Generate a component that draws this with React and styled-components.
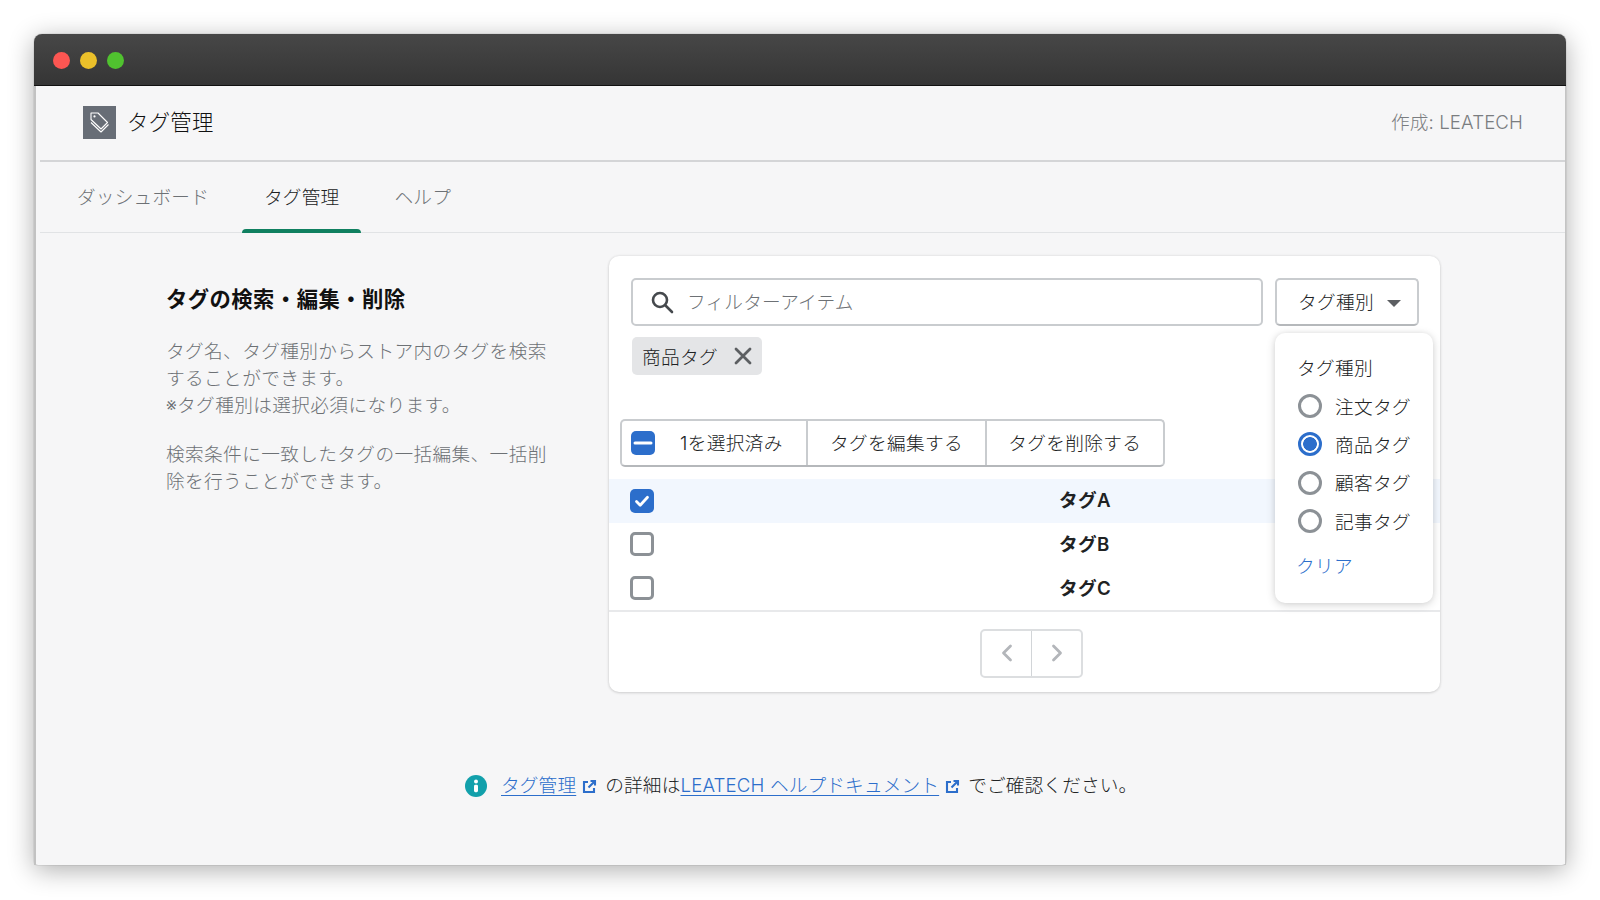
import React from "react";
import styled, { createGlobalStyle } from "styled-components";

const Global = createGlobalStyle`
  html, body { margin: 0; padding: 0; background: #fff; }
  body { font-family: Inter, "Noto Sans CJK JP", sans-serif; color: #202223; font-size: 18.67px; letter-spacing: 0.35px; }
  * { box-sizing: border-box; }
`;

const Page = styled.div`
  width: 1600px;
  height: 900px;
  padding: 34px;
  overflow: hidden;
`;

const Win = styled.div`
  width: 1532px;
  height: 831px;
  display: flex;
  flex-direction: column;
  background: #f6f6f7;
  border-radius: 8px 8px 4px 4px;
  box-shadow: 0 0 1px rgba(0, 0, 0, 0.55), 0 5px 26px rgba(0, 0, 0, 0.32);
`;

const TitleBar = styled.div`
  height: 52px;
  flex: none;
  display: flex;
  align-items: center;
  gap: 10px;
  padding: 1px 0 0 19px;
  border-radius: 8px 8px 0 0;
  background: linear-gradient(#474747, #353535);
  border-bottom: 1px solid #111;
`;

const Dot = styled.span`
  width: 17px;
  height: 17px;
  border-radius: 50%;
  background: ${(p) => p.$color};
`;

const Content = styled.div`
  flex: 1;
  display: flex;
  flex-direction: column;
  padding-left: 4px;
  border-left: 2px solid #c2c2c2;
  border-right: 1px solid #c4c4c4;
`;

const Txt = styled.span`
  display: block;
  padding-bottom: ${(p) => p.$lift ?? 4}px;
`;

const Header = styled.header`
  height: 76px;
  flex: none;
  display: flex;
  align-items: center;
  justify-content: space-between;
  padding: 0 42px 2px 43px;
  border-bottom: 2px solid #d4d5d7;
`;

const Brand = styled.div`
  display: flex;
  align-items: center;
  gap: 11px;
  font-size: 21.33px;
  font-weight: 300;
  color: #111;
`;

const BrandIcon = styled.div`
  width: 33px;
  height: 33px;
  display: flex;
  align-items: center;
  justify-content: center;
  background: #676d76;
`;

const Author = styled.div`
  color: #7a7d80;
  font-weight: 300;
  letter-spacing: 0.12px;
`;

const Tabs = styled.nav`
  height: 71px;
  flex: none;
  display: flex;
  padding-left: 15px;
  gap: 11px;
  border-bottom: 1px solid #e1e3e5;
  letter-spacing: 0.2px;
`;

const Tab = styled.div`
  position: relative;
  display: flex;
  align-items: center;
  padding: 0 22px;
  height: 100%;
  font-weight: 300;
  color: ${(p) => (p.$active ? "#202223" : "#6d7175")};
  &::after {
    content: "";
    display: ${(p) => (p.$active ? "block" : "none")};
    position: absolute;
    left: 0;
    right: 0;
    bottom: -1px;
    height: 4px;
    border-radius: 4px 4px 0 0;
    background: #108060;
  }
`;

const Main = styled.main`
  display: flex;
  padding: 23px 0 0 126px;
`;

const Intro = styled.section`
  width: 443px;
  flex: none;
  padding-top: 28px;
`;

const IntroTitle = styled.h2`
  margin: 0 0 24px;
  font-size: 21.33px;
  line-height: 30px;
  font-weight: 600;
  color: #111;
  letter-spacing: 0.45px;
`;

const IntroText = styled.p`
  margin: 0 0 21.5px;
  width: 392px;
  font-size: 18.67px;
  line-height: 27.2px;
  font-weight: 300;
  color: #6d7175;
  letter-spacing: 0.38px;
`;

const Card = styled.section`
  position: relative;
  width: 831px;
  height: 436px;
  flex: none;
  padding-top: 22px;
  background: #fff;
  border-radius: 10px;
  box-shadow: 0 0 3px rgba(23, 24, 24, 0.1), 0 1px 3px rgba(0, 0, 0, 0.12);
`;

const FilterRow = styled.div`
  display: flex;
  gap: 12px;
  padding: 0 21px 0 22px;
`;

const SearchBox = styled.div`
  flex: 1;
  height: 48px;
  display: flex;
  align-items: center;
  gap: 13px;
  padding-left: 17px;
  border: 2px solid #c9cccf;
  border-radius: 5px;
  font-weight: 300;
  color: #6d7175;
  letter-spacing: 0.2px;
`;

const TypeButton = styled.div`
  width: 144px;
  height: 48px;
  display: flex;
  align-items: center;
  gap: 13px;
  padding-left: 21px;
  border: 2px solid #c9cccf;
  border-bottom-color: #b5b8bb;
  border-radius: 5px;
  font-weight: 300;
`;

const Caret = styled.span`
  width: 0;
  height: 0;
  margin-top: 2px;
  border-left: 7px solid transparent;
  border-right: 7px solid transparent;
  border-top: 7px solid #5c5f62;
`;

const Chip = styled.div`
  display: inline-flex;
  align-items: center;
  height: 38px;
  margin: 11px 0 0 23px;
  padding: 0 10px;
  gap: 16px;
  border-radius: 5px;
  background: #e4e5e7;
  font-weight: 300;
`;

const BulkBar = styled.div`
  display: flex;
  width: 545px;
  height: 48px;
  margin: 44px 0 12px 11px;
  border: 2px solid #c9cccf;
  border-bottom-color: #b5b8bb;
  border-radius: 5px;
`;

const BulkCell = styled.div`
  display: flex;
  align-items: center;
  justify-content: ${(p) => (p.$start ? "flex-start" : "center")};
  height: 100%;
  width: ${(p) => p.$width}px;
  padding-left: ${(p) => (p.$start ? 9 : 0)}px;
  gap: 25px;
  font-weight: 300;
  & + & { border-left: 2px solid #c9cccf; }
`;

const Rows = styled.div`
  border-bottom: 2px solid #e8e9eb;
`;

const Row = styled.div`
  height: 43.67px;
  display: flex;
  align-items: center;
  padding-left: 21px;
  background: ${(p) => (p.$selected ? "#f2f7fe" : "transparent")};
`;

const Box = styled.span`
  flex: none;
  width: 24px;
  height: 24px;
  display: flex;
  align-items: center;
  justify-content: center;
  border-radius: 5px;
  background: ${(p) => (p.$on ? "#2c6ecb" : "#fff")};
  border: ${(p) => (p.$on ? "none" : "3px solid #8c9196")};
`;

const RowLabel = styled.span`
  margin-left: 405px;
  font-weight: 600;
  color: #202223;
`;

const Pager = styled.div`
  display: flex;
  justify-content: center;
  padding: 17px 0 0 14px;
`;

const PagerGroup = styled.div`
  display: flex;
  width: 103px;
  height: 49px;
  border: 2px solid #dcdee0;
  border-radius: 5px;
`;

const PagerButton = styled.div`
  flex: 1;
  display: flex;
  align-items: center;
  justify-content: center;
  & + & { border-left: 1.5px solid #d2d5d8; }
`;

const Popover = styled.div`
  position: absolute;
  left: 666px;
  top: 77px;
  width: 158px;
  height: 270px;
  padding: 20px 0 0 23px;
  background: #fff;
  border-radius: 10px;
  box-shadow: 0 0 5px rgba(23, 24, 24, 0.06), 0 2px 10px rgba(0, 0, 0, 0.16);
  font-weight: 300;
`;

const PopTitle = styled.div`
  height: 30px;
  line-height: 30px;
  margin: 1px 0 3px -1px;
`;

const RadioRow = styled.div`
  height: 38.3px;
  display: flex;
  align-items: center;
  gap: 13px;
`;

const Radio = styled.span`
  flex: none;
  width: 24px;
  height: 24px;
  border-radius: 50%;
  background: ${(p) => (p.$on ? "radial-gradient(circle, #2c6ecb 0 6.5px, #fff 7.2px)" : "#fff")};
  border: 3px solid ${(p) => (p.$on ? "#2c6ecb" : "#8c9196")};
`;

const ClearLink = styled.div`
  margin: 11px 0 0 -2px;
  color: #2c6ecb;
`;

const Note = styled.footer`
  display: flex;
  align-items: center;
  padding: 78px 0 0 425px;
  font-weight: 300;
  color: #202223;
  white-space: nowrap;
  letter-spacing: 0.15px;
`;

const InfoIcon = styled.span`
  display: flex;
  margin-right: 14px;
`;

const NoteLink = styled.a`
  color: #2c6ecb;
  text-decoration: underline;
  text-underline-offset: 3px;
`;

const External = styled.span`
  display: flex;
  margin: 0 ${(p) => p.$after}px 0 6px;
`;

const TagIcon = () => (
  <svg width="26" height="26" viewBox="0 0 26 26" fill="none" stroke="#fff" strokeWidth="1.1" strokeLinejoin="round">
    <path d="M4 4h7l9.5 9.5-6.5 6.5L4 10.5z" fill="#676d76" />
    <path d="M4 13.5l10 9.5 7.5-7.5" />
    <circle cx="7.5" cy="7.4" r="1.1" fill="#fff" stroke="none" />
  </svg>
);

const SearchIcon = () => (
  <svg width="24" height="24" viewBox="0 0 24 24" fill="none" stroke="#45494d" strokeWidth="2.6" strokeLinecap="round">
    <circle cx="10" cy="10" r="7" />
    <path d="M15.5 15.5l6.5 6.5" />
  </svg>
);

const CloseIcon = () => (
  <svg width="18" height="18" viewBox="0 0 18 18" stroke="#5c5f62" strokeWidth="2.8" strokeLinecap="round">
    <path d="M2 2l14 14M16 2L2 16" />
  </svg>
);

const Chevron = ({ dir }) => (
  <svg width="12" height="18" viewBox="0 0 12 18" fill="none" stroke="#b3b6ba" strokeWidth="2.8" strokeLinecap="round" strokeLinejoin="round">
    <path d={dir === "left" ? "M9.5 2L2.5 9l7 7" : "M2.5 2l7 7-7 7"} />
  </svg>
);

const CheckMark = () => (
  <svg width="16" height="16" viewBox="0 0 16 16" fill="none" stroke="#fff" strokeWidth="2.8" strokeLinecap="round" strokeLinejoin="round">
    <path d="M2.5 8.5l3.7 3.7 7.3-8" />
  </svg>
);

const MinusMark = () => (
  <svg width="20" height="6" viewBox="0 0 20 6" stroke="#fff" strokeWidth="3" strokeLinecap="round">
    <path d="M2 3h16" />
  </svg>
);

const ExternalIcon = () => (
  <svg width="15" height="15" viewBox="0 0 15 15" fill="none" stroke="#2c6ecb" strokeWidth="2.1">
    <path d="M6 3H2v10h10V9" />
    <path d="M6.5 8.5l6-6M8.5 2h4.5v4.5" />
  </svg>
);

const Info = () => (
  <svg width="22" height="22" viewBox="0 0 22 22">
    <circle cx="11" cy="11" r="11" fill="#12a0ab" />
    <circle cx="11" cy="6.6" r="2" fill="#fff" />
    <rect x="9" y="9.8" width="4" height="7.4" rx="1.4" fill="#fff" />
  </svg>
);

const tags = [
  { name: "タグA", on: true },
  { name: "タグB", on: false },
  { name: "タグC", on: false },
];
const kinds = [
  { name: "注文タグ", on: false },
  { name: "商品タグ", on: true },
  { name: "顧客タグ", on: false },
  { name: "記事タグ", on: false },
];

export default function App() {
  return (
    <Page>
      <Global />
      <Win>
        <TitleBar>
          <Dot $color="#fc5652" />
          <Dot $color="#ebc02a" />
          <Dot $color="#50c22f" />
        </TitleBar>
        <Content>
          <Header>
            <Brand>
              <BrandIcon><TagIcon /></BrandIcon>
              <Txt>タグ管理</Txt>
            </Brand>
            <Author><Txt>作成: LEATECH</Txt></Author>
          </Header>
          <Tabs>
            <Tab><Txt>ダッシュボード</Txt></Tab>
            <Tab $active><Txt>タグ管理</Txt></Tab>
            <Tab><Txt>ヘルプ</Txt></Tab>
          </Tabs>
          <Main>
            <Intro>
              <IntroTitle>タグの検索・編集・削除</IntroTitle>
              <IntroText>
                タグ名、タグ種別からストア内のタグを検索することができます。
                <br />
                ※タグ種別は選択必須になります。
              </IntroText>
              <IntroText>検索条件に一致したタグの一括編集、一括削除を行うことができます。</IntroText>
            </Intro>
            <Card>
              <FilterRow>
                <SearchBox>
                  <SearchIcon />
                  <Txt>フィルターアイテム</Txt>
                </SearchBox>
                <TypeButton>
                  <Txt>タグ種別</Txt>
                  <Caret />
                </TypeButton>
              </FilterRow>
              <Chip>
                <Txt $lift={2}>商品タグ</Txt>
                <CloseIcon />
              </Chip>
              <BulkBar>
                <BulkCell $width={185} $start>
                  <Box $on><MinusMark /></Box>
                  <Txt>1を選択済み</Txt>
                </BulkCell>
                <BulkCell $width={179}><Txt>タグを編集する</Txt></BulkCell>
                <BulkCell $width={179}><Txt>タグを削除する</Txt></BulkCell>
              </BulkBar>
              <Rows>
                {tags.map((t) => (
                  <Row key={t.name} $selected={t.on}>
                    <Box $on={t.on}>{t.on && <CheckMark />}</Box>
                    <RowLabel><Txt>{t.name}</Txt></RowLabel>
                  </Row>
                ))}
              </Rows>
              <Pager>
                <PagerGroup>
                  <PagerButton><Chevron dir="left" /></PagerButton>
                  <PagerButton><Chevron dir="right" /></PagerButton>
                </PagerGroup>
              </Pager>
              <Popover>
                <PopTitle>タグ種別</PopTitle>
                {kinds.map((k) => (
                  <RadioRow key={k.name}>
                    <Radio $on={k.on} />
                    <Txt $lift={2}>{k.name}</Txt>
                  </RadioRow>
                ))}
                <ClearLink>クリア</ClearLink>
              </Popover>
            </Card>
          </Main>
          <Note>
            <InfoIcon><Info /></InfoIcon>
            <Txt $lift={5}><NoteLink>タグ管理</NoteLink></Txt>
            <External $after={8}><ExternalIcon /></External>
            <Txt $lift={5}>の詳細は</Txt>
            <Txt $lift={5}><NoteLink>LEATECH ヘルプドキュメント</NoteLink></Txt>
            <External $after={8}><ExternalIcon /></External>
            <Txt $lift={5}>でご確認ください。</Txt>
          </Note>
        </Content>
      </Win>
    </Page>
  );
}
